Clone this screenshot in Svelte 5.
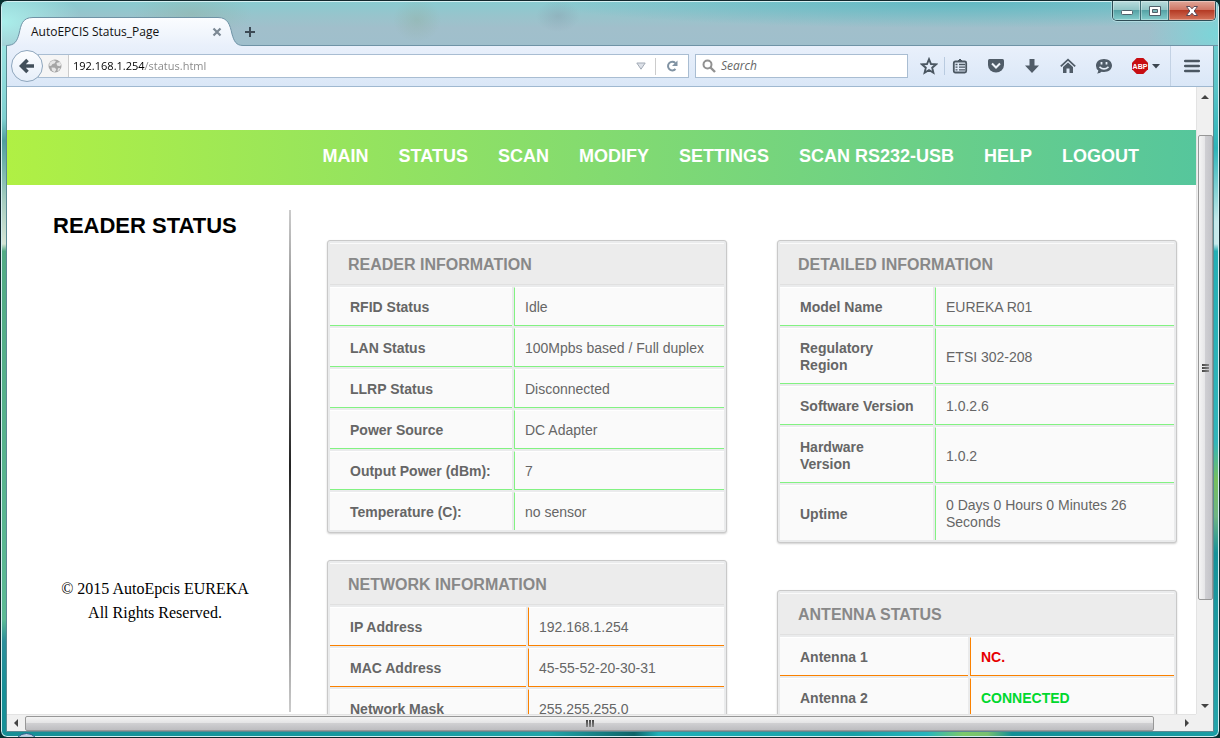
<script>
  let url = $state('192.168.1.254/status.html');

  const nav = ['MAIN', 'STATUS', 'SCAN', 'MODIFY', 'SETTINGS', 'SCAN RS232-USB', 'HELP', 'LOGOUT'];

  const columns = [
    {
      name: 'left',
      cards: [
        {
          title: 'READER INFORMATION', tone: 'green', label: 182,
          rows: [
            ['RFID Status', 'Idle'],
            ['LAN Status', '100Mpbs based / Full duplex'],
            ['LLRP Status', 'Disconnected'],
            ['Power Source', 'DC Adapter'],
            ['Output Power (dBm):', '7'],
            ['Temperature (C):', 'no sensor']
          ]
        },
        {
          title: 'NETWORK INFORMATION', tone: 'orange', label: 196,
          rows: [
            ['IP Address', '192.168.1.254'],
            ['MAC Address', '45-55-52-20-30-31'],
            ['Network Mask', '255.255.255.0']
          ]
        }
      ]
    },
    {
      name: 'right',
      cards: [
        {
          title: 'DETAILED INFORMATION', tone: 'green', label: 153,
          rows: [
            ['Model Name', 'EUREKA R01'],
            ['Regulatory Region', 'ETSI 302-208'],
            ['Software Version', '1.0.2.6'],
            ['Hardware Version', '1.0.2'],
            ['Uptime', '0 Days 0 Hours 0 Minutes 26 Seconds']
          ]
        },
        {
          title: 'ANTENNA STATUS', tone: 'orange', label: 188,
          rows: [
            ['Antenna 1', 'NC.', 'bad'],
            ['Antenna 2', 'CONNECTED', 'good']
          ]
        }
      ]
    }
  ];
</script>

<div class="window">
  <header class="titlebar">
    <div class="tab">
      <svg class="tab-shape" viewBox="0 0 237 29" width="237" height="29" aria-hidden="true">
        <defs>
          <linearGradient id="tabfill" x1="0" y1="0" x2="0" y2="1">
            <stop offset="0" stop-color="#fbfdff" />
            <stop offset="1" stop-color="#e9f0fb" />
          </linearGradient>
        </defs>
        <path d="M0 29V28.5C9 28.5 11 24 13 17C15 8 16 .5 27 .5H212C222 .5 224 8 226 17C228 24 230 28.5 237 28.5V29Z" fill="url(#tabfill)" />
        <path d="M0 28.5C9 28.5 11 24 13 17C15 8 16 .5 27 .5H212C222 .5 224 8 226 17C228 24 230 28.5 237 28.5" fill="none" stroke="#6f93a6" />
      </svg>
      <span class="tab-title">AutoEPCIS Status_Page</span>
      <button class="plain tab-close" aria-label="Close tab">
        <svg viewBox="0 0 10 10" width="10" height="10"><path d="M1.5 1.5l7 7M8.5 1.5l-7 7" stroke="#7c8894" stroke-width="2.2" /></svg>
      </button>
    </div>
    <button class="plain new-tab" aria-label="New tab">
      <svg viewBox="0 0 12 12" width="12" height="12"><path d="M6 1v10M1 6h10" stroke="#3c4a55" stroke-width="2" /></svg>
    </button>
    <div class="controls">
      <button class="ctl" aria-label="Minimize">
        <svg viewBox="0 0 14 12" width="14" height="12"><rect x="1.500" y="5.500" width="11" height="4" rx="1" fill="#fff" stroke="#51606b" /></svg>
      </button>
      <button class="ctl" aria-label="Maximize">
        <svg viewBox="0 0 14 12" width="14" height="12"><path d="M1.500 1.500h11v9h-11z" fill="#fff" stroke="#51606b" /><path d="M4.500 4.500h5v3h-5z" fill="#7ab8b9" stroke="#51606b" /></svg>
      </button>
      <button class="ctl close" aria-label="Close">
        <svg viewBox="0 0 14 12" width="14" height="12"><path d="M1.500 1.500h3.500l2 2.300 2-2.300h3.500L9.200 6l3.300 4.500H9L7 8.200 5 10.500H1.500L4.800 6z" fill="#fff" stroke="#5b4a56" /></svg>
      </button>
    </div>
  </header>

  <div class="chrome">
    <div class="toolbar">
      <button class="back" aria-label="Back">
        <svg viewBox="0 0 16 16" width="16" height="16"><path d="M8.500 2L2.500 8l6 6M3.500 8H15" fill="none" stroke="#424f5a" stroke-width="3.600" /></svg>
      </button>
      <div class="urlbar">
        <span class="identity">
          <svg viewBox="0 0 14 14" width="14" height="14"><circle cx="7" cy="7" r="6.500" fill="#a6a6a6" /><path d="M2 3.500L5 1.200 8 2 6.500 4.500 4.500 5 3 7 1 6.500zM8.500 4l3.500-1 1.300 3-1.800 1.200L9 6.500zM3.500 8.500l3.500.3 1.300 2-1.800 2.400L4 11.500zM10 9.300l2.200-.3-1.200 2.500-1.500.5z" fill="#e6e6e6" /></svg>
        </span>
        <input class="address" type="text" aria-label="Address" bind:value={url} />
        <button class="plain drop" aria-label="History">
          <svg viewBox="0 0 10 8" width="10" height="8"><path d="M.8 1h8.400L5 7.200z" fill="#dde1e8" stroke="#a3abb6" /></svg>
        </button>
        <button class="plain reload" aria-label="Reload">
          <svg viewBox="0 0 12 12" width="12" height="12"><path d="M9.300 3A4.300 4.300 0 1 0 9.500 9" fill="none" stroke="#8193a3" stroke-width="2" /><path d="M11.500.5v5.500H6z" fill="#8193a3" /></svg>
        </button>
      </div>
      <label class="search">
        <svg viewBox="0 0 14 14" width="14" height="14" aria-hidden="true"><circle cx="5.500" cy="5.500" r="4" fill="none" stroke="#919191" stroke-width="2" /><path d="M8.500 8.500l4.500 4.500" stroke="#919191" stroke-width="2.400" /></svg>
        <input type="text" placeholder="Search" aria-label="Search" />
      </label>
      <div class="actions">
        <button class="plain star" aria-label="Bookmark">
          <svg viewBox="0 0 18 18" width="18" height="18"><path d="M9 2.200l2 4.800 5 .4-3.800 3.300 1.200 5L9 13 4.600 15.700l1.200-5L2 7.400 7 7z" fill="none" stroke="#4b5762" stroke-width="1.900" /></svg>
        </button>
        <button class="plain" aria-label="Reading list">
          <svg viewBox="0 0 16 16" width="16" height="16"><path d="M5.500 3.500L8 1l2.500 2.500" fill="#4b5762" stroke="#4b5762" /><rect x="1.800" y="3.500" width="12.400" height="11" rx="1.500" fill="none" stroke="#4b5762" stroke-width="1.800" /><path d="M3.500 6.500h2M7 6.500h6M3.500 9.200h2M7 9.200h6M3.500 11.900h2M7 11.900h6" stroke="#4b5762" stroke-width="1.300" /></svg>
        </button>
        <button class="plain" aria-label="Pocket">
          <svg viewBox="0 0 16 16" width="16" height="16"><path d="M1.500 1h13q1.500 0 1.500 1.500V7a8 7.500 0 0 1-16 0V2.500Q0 1 1.500 1z" fill="#505c68" /><path d="M4 5.500l4 4 4-4" fill="none" stroke="#eef3fa" stroke-width="2" /></svg>
        </button>
        <button class="plain" aria-label="Downloads">
          <svg viewBox="0 0 16 16" width="16" height="16"><path d="M5.500 1h5v6.500H15L8 15 1 7.500h4.500z" fill="#505c68" /></svg>
        </button>
        <button class="plain" aria-label="Home">
          <svg viewBox="0 0 16 16" width="16" height="16"><path d="M.8 8.300L8 1.700l7.200 6.600" fill="none" stroke="#505c68" stroke-width="1.800" /><path d="M3 9l5-4.600L13 9v6H9.500v-4.500h-3V15H3z" fill="#505c68" /></svg>
        </button>
        <button class="plain" aria-label="Hello">
          <svg viewBox="0 0 16 16" width="16" height="16"><path d="M8 1c4.600 0 8 2.800 8 6.500S12.600 14 8 14q-1.200 0-2.300-.3Q4 15.500 1 15.500q1.200-1.200 1.300-3A6.200 6.200 0 0 1 0 7.500C0 3.800 3.400 1 8 1z" fill="#505c68" /><path d="M5.500 4v2.500M10.500 4v2.500" stroke="#e6eef8" stroke-width="1.800" /><path d="M3.500 8.800Q8 13 12.500 8.800" fill="none" stroke="#e6eef8" stroke-width="1.600" /></svg>
        </button>
        <button class="plain abp" aria-label="Adblock Plus">
          <svg viewBox="0 0 16 16" width="16" height="16"><path d="M4.700 0h6.600L16 4.700v6.600L11.300 16H4.700L0 11.300V4.700z" fill="#c70d12" /><text x="8" y="11" text-anchor="middle" fill="#fff" font-family="Liberation Sans, sans-serif" font-size="7" font-weight="700">ABP</text></svg>
          <svg viewBox="0 0 8 5" width="8" height="5"><path d="M0 0h8L4 4.500z" fill="#3c4650" /></svg>
        </button>
        <button class="plain menu" aria-label="Menu">
          <svg viewBox="0 0 16 14" width="16" height="14"><path d="M1.200 2h13.600M1.200 7h13.600M1.200 12h13.600" stroke="#4b5762" stroke-width="2.600" stroke-linecap="round" /></svg>
        </button>
      </div>
    </div>

    <div class="view">
      <main class="page">
        <nav class="nav">
          {#each nav as item}
            <a href="#{item}">{item}</a>
          {/each}
        </nav>
        <div class="content">
          <aside class="side">
            <h1>READER STATUS</h1>
            <p>© 2015 AutoEpcis EUREKA<br />All Rights Reserved.</p>
          </aside>
          <div class="cards">
            {#each columns as col}
              <div class="col {col.name}">
                {#each col.cards as card}
                  <table class={card.tone}>
                    <thead>
                      <tr><th colspan="2">{card.title}</th></tr>
                    </thead>
                    <tbody>
                      {#each card.rows as [label, value, state]}
                        <tr>
                          <th scope="row" style="width: {card.label}px">{label}</th>
                          <td class={state}>{value}</td>
                        </tr>
                      {/each}
                    </tbody>
                  </table>
                {/each}
              </div>
            {/each}
          </div>
        </div>
      </main>

      <div class="vbar">
        <svg viewBox="0 0 8 5" width="8" height="5"><path d="M0 5l4-4 4 4z" fill="#444" /></svg>
        <div class="vtrack"><div class="vthumb"><i></i><i></i><i></i></div></div>
        <svg viewBox="0 0 8 5" width="8" height="5"><path d="M0 0l4 4 4-4z" fill="#444" /></svg>
      </div>
      <div class="hbar">
        <svg viewBox="0 0 5 8" width="5" height="8"><path d="M5 0L1 4l4 4z" fill="#444" /></svg>
        <div class="htrack"><div class="hthumb"><i></i><i></i><i></i></div></div>
        <svg viewBox="0 0 5 8" width="5" height="8"><path d="M0 0l4 4-4 4z" fill="#444" /></svg>
      </div>
      <div class="corner"></div>
    </div>
  </div>
  <div class="orb"></div>
</div>

<style>
  :global(body) { background: #06302f; }
  :global(*) { box-sizing: border-box; }

  .window {
    position: relative;
    height: 100vh;
    display: flex;
    flex-direction: column;
    padding: 0 5px 5px;
    border: 1px solid #12282d;
    border-radius: 7px;
    box-shadow: inset 0 0 0 1px #d5f0f2;
    overflow: hidden;
    background:
      linear-gradient(90deg, #168f96, #16999f 30%, #21a5a9 45%, #0e6468 52%, #1fb0b8 54%, #16a0a6 70%, #27b5bd 76%, #7cc96a 79%, #78c070 81%, #118f96 83%, #1b9ea5) 0 100% / 100% 7px no-repeat,
      linear-gradient(180deg, #a5ece8 0, #90dcdc 10%, #7fd0d0 16%, #4f9f9d 19%, #a5cdbf 27%, #d5e5d5 33%, #52ab84 34%, #5cba94 84%, #2c8f9a 87%, #168f96 94%) 0 0 / 7px 100% no-repeat,
      linear-gradient(180deg, #7fd4d6 0, #58c4c8 12%, #2db4b8 20%, #c5e9ea 30%, #c5e9ea 33%, #25afb5 34%, #32b5ba 60%, #76c05e 65%, #6fb583 70%, #169299 75%, #27a5ab) 100% 0 / 7px 100% no-repeat;
  }

  .plain {
    padding: 0;
    border: 0;
    background: none;
    display: flex;
    align-items: center;
    justify-content: center;
  }

  .titlebar {
    display: flex;
    align-items: flex-end;
    height: 44px;
    flex: none;
    margin: 1px -4px 0;
    padding-left: 4px;
    background:
      radial-gradient(ellipse 22px 16px at 556px 14px, #7f8fa04d, #7f8fa000),
      radial-gradient(ellipse 24px 22px at 415px 18px, #8fae9f66, #8fae9f00),
      radial-gradient(ellipse 60px 24px at 190px 12px, #8fae9f66, #8fae9f00),
      radial-gradient(ellipse 80px 40px at 0 20px, #a9efeb, #a9efeb00),
      radial-gradient(ellipse 70px 40px at 100% 32px, #7ad6d9, #7ad6d900),
      radial-gradient(ellipse 420px 26px at 960px 0, #4eafbbaa, #4eafbb00),
      linear-gradient(180deg, #89cbd0 0, #98c4cc 14px, #a1bfcb 26px, #9fbfcc);
  }
  .tab {
    position: relative;
    width: 237px;
    height: 29px;
    display: flex;
    align-items: center;
    padding: 0 20px 0 25px;
    justify-content: space-between;
  }
  .tab-shape { position: absolute; left: 0; top: 0; }
  .tab-title, .tab-close { position: relative; }
  .tab-title { font: 12px/16px "Open Sans", sans-serif; color: #111; }
  .tab-close { width: 12px; height: 12px; }
  .new-tab { width: 14px; height: 29px; }
  .titlebar::after { content: ""; order: 1; flex: 1; height: 1px; margin-left: -14px; background: #6f93a6; }
  .controls {
    order: 2;
    display: flex;
    align-self: flex-start;
    height: 20px;
    margin: -1px 2px 0 -106px;
    border: 1px solid #2d4c55;
    border-top: 0;
    border-radius: 0 0 5px 5px;
    box-shadow: 0 0 0 1px #bfe6e8aa;
    overflow: hidden;
  }
  .ctl {
    width: 28px;
    padding: 0;
    border: 0;
    border-right: 1px solid #3d6a72;
    background: linear-gradient(180deg, #b9dcdd 0, #8fc3c4 48%, #56a3a6 50%, #84cccc);
    box-shadow: inset 0 0 0 1px #ffffff55;
    display: flex;
    align-items: center;
    justify-content: center;
  }
  .ctl.close {
    width: 46px;
    border-right: 0;
    background: linear-gradient(180deg, #e0a799 0, #cf7463 48%, #b53b25 50%, #d4735a);
  }

  .chrome {
    flex: 1;
    min-height: 0;
    display: flex;
    flex-direction: column;
    border: 1px solid #5b8a93;
    border-top: 0;
  }
  .toolbar {
    flex: none;
    height: 41px;
    display: flex;
    align-items: center;
    padding: 0 1px 0 4px;
    background: linear-gradient(180deg, #e9f0fb, #dae7f7);
    border-bottom: 1px solid #9fb8d0;
  }
  .back {
    position: relative;
    z-index: 1;
    flex: none;
    width: 32px;
    height: 32px;
    padding: 0;
    border: 1px solid #8ea6bd;
    border-radius: 50%;
    background: linear-gradient(180deg, #fdfeff, #e6eef9);
    display: flex;
    align-items: center;
    justify-content: center;
  }
  .urlbar {
    flex: 3 1 651px;
    height: 24px;
    margin-left: -5px;
    display: flex;
    align-items: center;
    background: #fff;
    border: 1px solid #a9bdd2;
  }
  .identity {
    flex: none;
    height: 100%;
    width: 30px;
    padding-left: 9px;
    display: flex;
    align-items: center;
    background: #f5f5f5;
    border-right: 1px solid #ccc;
  }
  .address {
    flex: 1;
    min-width: 0;
    padding: 0 0 0 4px;
    border: 0;
    outline: 0;
    font: 11px/16px "Open Sans", sans-serif;
    color: transparent;
    /* host name in black, path in grey */
    background: linear-gradient(90deg, #000 76px, #858585 76px);
    background-clip: text;
    -webkit-background-clip: text;
    caret-color: #000;
  }
  .drop { width: 28px; }
  .reload { width: 33px; height: 17px; border-left: 1px solid #ccc; }
  .search {
    flex: 1 1 213px;
    height: 24px;
    margin-left: 6px;
    padding-left: 6px;
    display: flex;
    align-items: center;
    gap: 5px;
    background: #fff;
    border: 1px solid #a9bdd2;
  }
  .search svg { flex: none; }
  .search input {
    width: 100%;
    min-width: 0;
    padding: 0;
    border: 0;
    outline: 0;
    background: none;
    font: italic 12px/16px "Open Sans", sans-serif;
  }
  .search input::placeholder { color: #666; opacity: 1; }
  .actions { flex: none; display: flex; align-items: center; height: 100%; }
  .actions .plain { width: 36px; }
  .actions .plain.star { width: 32px; height: 18px; margin-left: 5px; border-right: 1px solid #b9cbe0; }
  .actions .plain.star + .plain { width: 30px; margin-right: 3px; }
  .actions .plain.abp { width: 48px; gap: 4px; }
  .actions .plain.menu { width: 42px; height: 100%; border-left: 1px solid #c3d2e4; }

  .view {
    flex: 1;
    min-height: 0;
    display: grid;
    grid-template-columns: minmax(0, 1fr) 17px;
    grid-template-rows: minmax(0, 1fr) 17px;
    background: #fff;
  }
  .page { overflow: hidden; padding-top: 43px; }
  .nav {
    height: 55px;
    display: flex;
    align-items: center;
    justify-content: flex-end;
    gap: 30px;
    padding: 0 57px 3px 0;
    background: linear-gradient(90deg, #b0f044, #56c69c);
  }
  .nav a {
    font: 700 18px/22px "Liberation Sans", Arial, sans-serif;
    color: #fff;
    text-decoration: none;
    white-space: nowrap;
  }
  .content {
    display: grid;
    grid-template-columns: 284px minmax(0, 1fr);
    gap: 36px;
    padding: 25px 19px 0 0;
  }
  .side {
    height: 502px;
    border-right: 2px solid;
    border-image: linear-gradient(180deg, #ccc, #222 51%, #ccc) 1;
    display: flex;
    flex-direction: column;
    justify-content: space-between;
  }
  .side h1 {
    margin: 0;
    padding: 3px 0 0 46px;
    font: 700 22px/26px "Liberation Sans", Arial, sans-serif;
    color: #000;
  }
  .side p {
    margin: 0;
    padding: 0 0 87px 14px;
    text-align: center;
    font: 16px/24px "Liberation Serif", "Times New Roman", serif;
    color: #000;
  }
  .cards {
    display: grid;
    grid-template-columns: repeat(2, minmax(0, 1fr));
    align-items: start;
    gap: 50px;
    padding-top: 30px;
  }
  .col { display: flex; flex-direction: column; }
  .col.left { gap: 27px; }
  .col.right { gap: 47px; }

  table {
    width: 100%;
    border: 1px solid #c9c9c9;
    border-radius: 3px;
    border-collapse: separate;
    border-spacing: 2px;
    background: #eaebec;
    box-shadow: 0 1px 2px #d1d1d1;
    font: 14px/17px "Liberation Sans", Arial, sans-serif;
    color: #666;
    --line: #82f282;
  }
  table.orange { --line: #fa8100; }
  th { text-align: left; }
  thead th {
    height: 42px;
    padding: 0 18px;
    font-size: 16px;
    color: #888;
    background: #ececec;
    border-top: 1px solid #fafafa;
    border-bottom: 1px solid #e0e0e0;
  }
  tbody th, tbody td {
    background: #fafafa;
    border-top: 1px solid #fff;
    border-bottom: 1px solid var(--line);
  }
  tbody th { padding: 11px 17px 9px 20px; }
  tbody td { padding: 11px 10px 9px; border-left: 1px solid var(--line); }
  tbody tr:last-child > * { border-bottom: 0; }
  td.bad { color: #e60000; font-weight: 700; }
  td.good { color: #00d82e; font-weight: 700; }

  .vbar, .hbar, .corner { background: #f0f0f0; }
  .vbar {
    display: flex;
    flex-direction: column;
    align-items: center;
    padding: 7px 0 5px;
    border-left: 1px solid #e3e3e3;
  }
  .vtrack { flex: 1; width: 15px; padding: 36px 0 104px; display: flex; }
  .vthumb {
    flex: 1;
    display: flex;
    flex-direction: column;
    align-items: center;
    justify-content: center;
    gap: 1px;
    border: 1px solid #979797;
    border-radius: 2px;
    background: linear-gradient(90deg, #f5f5f5, #e6e6e8 45%, #cfcfd3 50%, #c3c3c8);
  }
  .vthumb i { width: 7px; height: 2px; background: linear-gradient(90deg, #444, #888); }
  .hbar {
    display: flex;
    align-items: center;
    padding: 0 6px;
    border-top: 1px solid #e3e3e3;
  }
  .htrack { flex: 1; height: 15px; padding: 0 31px 0 7px; display: flex; }
  .hthumb {
    flex: 1;
    display: flex;
    align-items: center;
    justify-content: center;
    gap: 1px;
    border: 1px solid #979797;
    border-radius: 2px;
    background: linear-gradient(180deg, #f3f3f3, #e4e4e5 45%, #cfcfd1 50%, #bdbdc0);
  }
  .hthumb i { width: 2px; height: 7px; background: linear-gradient(180deg, #444, #888); }
  .orb {
    position: absolute;
    left: 13px;
    bottom: -21px;
    width: 25px;
    height: 25px;
    border: 1px solid #2a5a88;
    border-radius: 50%;
    background: #b9cfe0;
  }
</style>
